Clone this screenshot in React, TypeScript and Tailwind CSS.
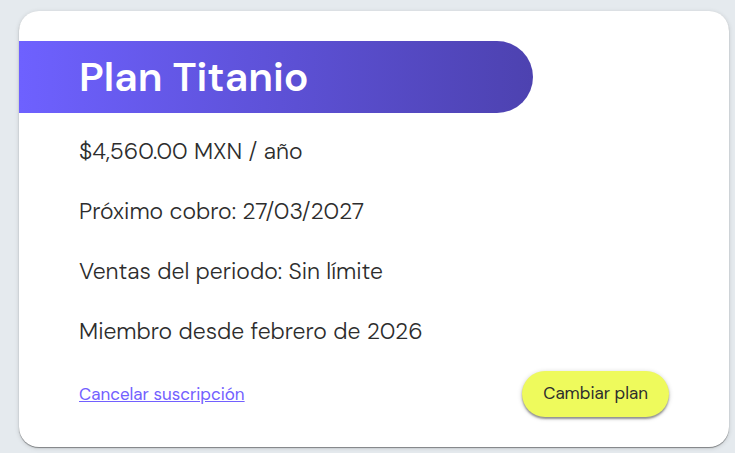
const details: string[] = [
  '$4,560.00 MXN / año',
  'Próximo cobro: 27/03/2027',
  'Ventas del periodo: Sin límite',
  'Miembro desde febrero de 2026',
];

export default function App() {
  return (
    <main className="min-h-screen bg-[#e5eaee] pt-[11px] pr-1.5 pb-1.5 pl-[19px] font-['DM_Sans','Inter',sans-serif] text-[#2d2d2d]">
      <section className="rounded-[20px] bg-white py-[30px] shadow-[0_1px_1px_rgba(0,0,0,0.4),0_1px_5px_rgba(0,0,0,0.14)]">
        <h1 className="w-[514px] max-w-full rounded-r-full bg-linear-to-r from-[#6e61ff] to-[#4d42b0] pl-[60px] text-[41px] leading-[72px] font-semibold text-white">
          Plan Titanio
        </h1>
        <div className="flex flex-col gap-[22px] px-[60px] pt-5">
          <div className="flex flex-col gap-6">
            {details.map((line) => (
              <p key={line} className="text-[23px] leading-9 font-light">
                {line}
              </p>
            ))}
          </div>
          <div className="flex items-center justify-between">
            <a href="#cancelar" className="text-[17px] leading-6 text-[#7260ff] underline">
              Cancelar suscripción
            </a>
            <button
              type="button"
              className="h-[46px] rounded-full bg-[#eefa5c] px-[21px] text-[17px] shadow-[0_2px_2px_rgba(0,0,0,0.35),0_1px_5px_rgba(0,0,0,0.2)]"
            >
              Cambiar plan
            </button>
          </div>
        </div>
      </section>
    </main>
  );
}
